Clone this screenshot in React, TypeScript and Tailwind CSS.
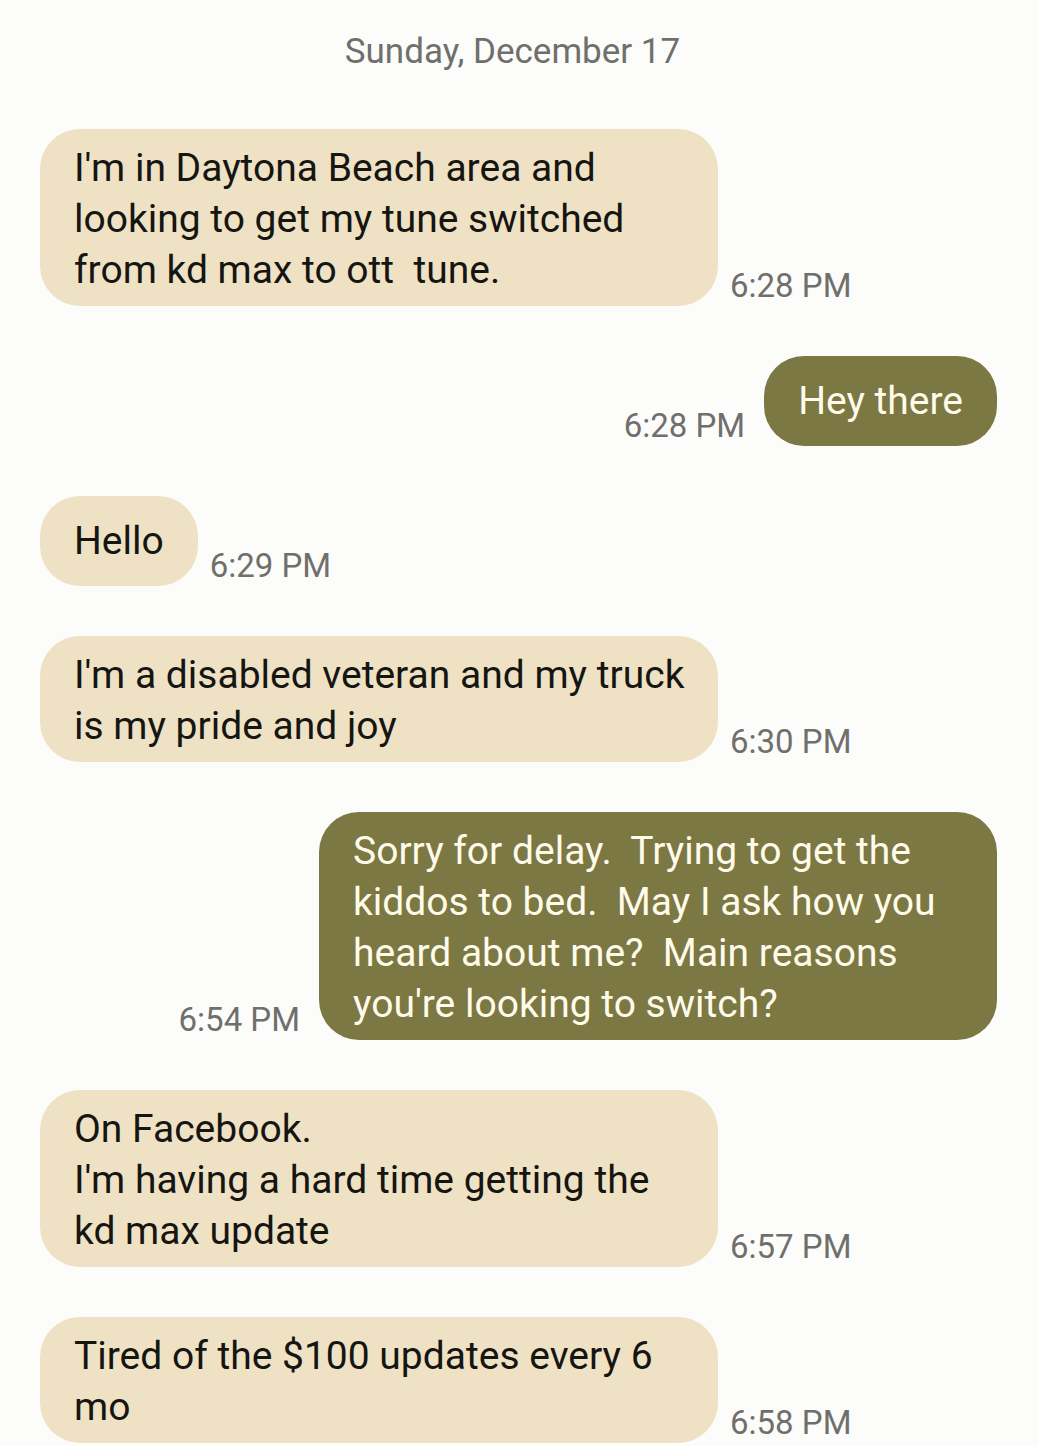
import React from "react";

type Msg = { side: "in" | "out"; lines: string[]; time: string; full?: boolean };

const msgs: Msg[] = [
  { side: "in", lines: ["I'm in Daytona Beach area and", "looking to get my tune switched", "from kd max to ott  tune."], time: "6:28 PM", full: true },
  { side: "out", lines: ["Hey there"], time: "6:28 PM" },
  { side: "in", lines: ["Hello"], time: "6:29 PM" },
  { side: "in", lines: ["I'm a disabled veteran and my truck", "is my pride and joy"], time: "6:30 PM", full: true },
  { side: "out", lines: ["Sorry for delay.  Trying to get the", "kiddos to bed.  May I ask how you", "heard about me?  Main reasons", "you're looking to switch?"], time: "6:54 PM", full: true },
  { side: "in", lines: ["On Facebook.", "I'm having a hard time getting the", "kd max update"], time: "6:57 PM", full: true },
  { side: "in", lines: ["Tired of the $100 updates every 6", "mo"], time: "6:58 PM", full: true },
];

function Time({ t, cls }: { t: string; cls: string }) {
  return (
    <div
      className={`shrink-0 text-[33px] leading-[38px] text-[#6f6f6c] pb-[1px] ${cls}`}
      style={{ fontFamily: "Roboto, sans-serif" }}
    >
      {t}
    </div>
  );
}

function Bubble({ m }: { m: Msg }) {
  const isIn = m.side === "in";
  return (
    <div
      className={`${m.full ? "w-[678px] pt-[14px] pb-[10px]" : "py-[12px]"} min-h-[90px] flex flex-col justify-center rounded-[40px] px-[34px] text-[39px] leading-[51px] ${
        isIn ? "bg-[#efe1c4] text-[#151512]" : "bg-[#7b7844] text-[#fffbea]"
      }`}
      style={{ fontFamily: "Roboto, sans-serif" }}
    >
      {m.lines.map((l, i) => (
        <div key={i} className="whitespace-pre">
          {l}
        </div>
      ))}
    </div>
  );
}

export default function App() {
  return (
    <div className="w-[1038px] h-[1446px] overflow-hidden bg-[#fcfcfa]">
      <div
        className="pt-[30px] h-[129px] pr-[13px] text-center text-[35px] leading-[44px] text-[#6f6f6c]"
        style={{ fontFamily: "Roboto, sans-serif" }}
      >
        Sunday, December 17
      </div>
      <div className="flex flex-col gap-[50px] pl-[40px] pr-[41px]">
        {msgs.map((m, i) =>
          m.side === "in" ? (
            <div key={i} className="flex items-end">
              <Bubble m={m} />
              <Time t={m.time} cls="ml-[12px]" />
            </div>
          ) : (
            <div key={i} className="flex items-end justify-end">
              <Time t={m.time} cls="mr-[19px]" />
              <Bubble m={m} />
            </div>
          )
        )}
      </div>
    </div>
  );
}
